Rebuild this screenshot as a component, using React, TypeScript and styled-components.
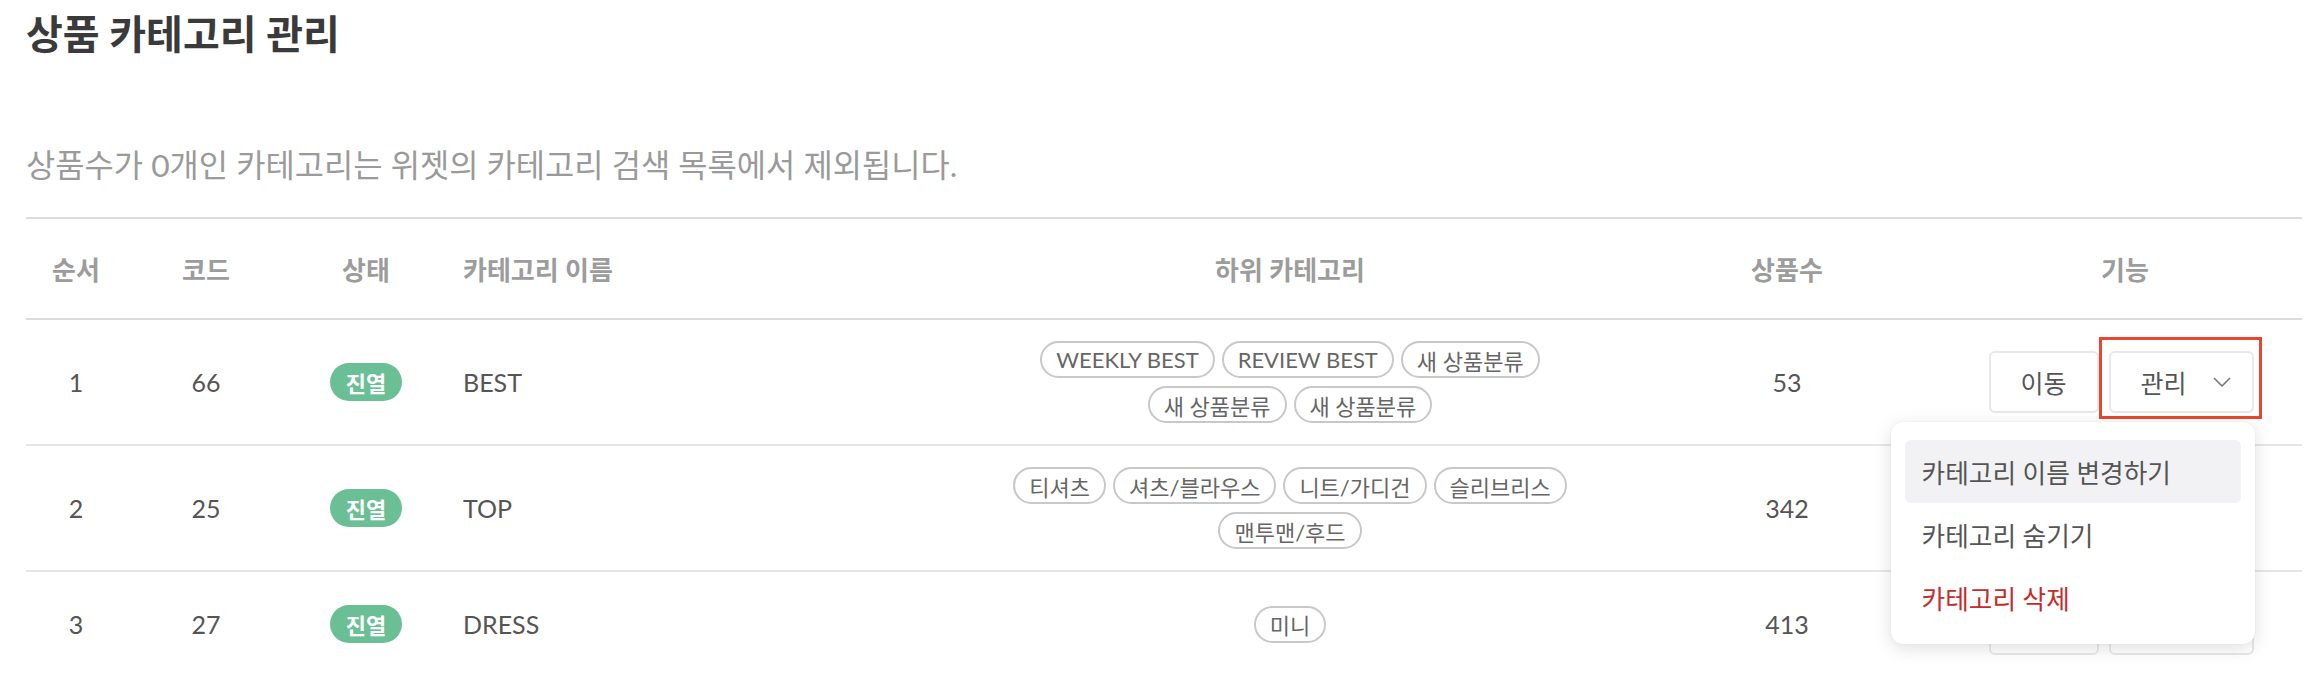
import React from "react";
import styled, { createGlobalStyle } from "styled-components";

const GlobalStyle = createGlobalStyle`
  html, body { margin: 0; padding: 0; background: #fff; }
  body {
    font-family: Lato, "Noto Sans CJK KR", sans-serif;
    color: #555;
  }
  * { box-sizing: border-box; }
`;

const Page = styled.div`
  padding: 0 10px 0 26px;
`;

const Title = styled.h1`
  margin: 0;
  padding-top: 8px;
  font-size: 40px;
  line-height: 52px;
  font-weight: 700;
  color: #3a3a3a;
`;

const Subtitle = styled.p`
  margin: 0;
  padding-top: 85px;
  font-size: 31.8px;
  line-height: 40px;
  color: #9a9a9a;
  height: 157px;
`;

const COLS = "100px 160px 160px 484px 720px 274px 1fr";

const HeaderRow = styled.div`
  display: grid;
  grid-template-columns: ${COLS};
  align-items: center;
  height: 103px;
  border-top: 2px solid #dcdcdc;
  border-bottom: 2px solid #dcdcdc;
`;

const HeadCell = styled.div<{ $align?: "left" | "center"; $shift?: number }>`
  text-align: ${(p) => p.$align ?? "center"};
  padding-left: ${(p) => (p.$align === "left" ? 17 : p.$shift ?? 0)}px;
  font-size: 26px;
  font-weight: 700;
  color: #9c9c9c;
`;

const Row = styled.div`
  display: grid;
  grid-template-columns: ${COLS};
  align-items: center;
  min-height: 101px;
  padding: 21px 0;
  border-bottom: 2px solid #e6e6e6;
`;

const Cell = styled.div<{ $align?: "left" | "center" }>`
  display: flex;
  justify-content: ${(p) => (p.$align === "left" ? "flex-start" : "center")};
  align-items: center;
  padding-left: ${(p) => (p.$align === "left" ? 17 : 0)}px;
  font-size: 25px;
  color: #555;
`;

const Badge = styled.span`
  display: inline-flex;
  align-items: center;
  justify-content: center;
  width: 72px;
  height: 38px;
  border-radius: 19px;
  background: #6bbf94;
  color: #fff;
  font-size: 22px;
  font-weight: 700;
`;

const TagList = styled.div`
  display: flex;
  flex-wrap: wrap;
  justify-content: center;
  gap: 8px 7px;
  max-width: 600px;
`;

const Tag = styled.span`
  display: inline-flex;
  align-items: center;
  height: 37px;
  padding: 0 14px;
  border: 2px solid #c8c8c8;
  border-radius: 19px;
  font-size: 22px;
  color: #666;
  white-space: nowrap;
`;

const Actions = styled.div`
  display: flex;
  gap: 10px;
  padding-left: 16px;
`;

const Button = styled.button`
  display: inline-flex;
  align-items: center;
  justify-content: center;
  height: 62px;
  padding: 0;
  background: #fff;
  border: 2px solid #e8e8e8;
  border-radius: 6px;
  font-family: inherit;
  font-size: 25px;
  color: #555;
  white-space: nowrap;
`;

const MoveButton = styled(Button)`
  width: 110px;
`;

const ManageWrap = styled.div`
  position: relative;
`;

const ManageButton = styled(Button)`
  width: 145px;
  padding: 0 21px 0 30px;
  justify-content: space-between;
`;

const Highlight = styled.span`
  position: absolute;
  top: -14px;
  left: -10px;
  right: -8px;
  bottom: -6px;
  border: 3px solid #e8472f;
  pointer-events: none;
  z-index: 5;
`;

const Menu = styled.div`
  position: absolute;
  top: 71px;
  right: -1px;
  width: 364px;
  padding: 18px 14px 15px;
  background: #fff;
  border-radius: 12px;
  box-shadow: 0 4px 18px rgba(0, 0, 0, 0.13), 0 0 1px rgba(0, 0, 0, 0.12);
  z-index: 10;
  display: flex;
  flex-direction: column;
`;

const MenuItem = styled.div<{ $active?: boolean; $danger?: boolean }>`
  height: 63px;
  display: flex;
  align-items: center;
  padding-left: 17px;
  border-radius: 6px;
  background: ${(p) => (p.$active ? "#f2f2f4" : "transparent")};
  color: ${(p) => (p.$danger ? "#c42b2b" : "#555")};
  font-size: 25.7px;
  white-space: nowrap;
`;

const Chevron = () => (
  <svg width="18" height="10" viewBox="0 0 18 10" fill="none">
    <polyline points="1,1 9,9 17,1" stroke="#777" strokeWidth="1.6" />
  </svg>
);

type Item = { order: number; code: number; name: string; subs: string[]; count: number };

const items: Item[] = [
  { order: 1, code: 66, name: "BEST", subs: ["WEEKLY BEST", "REVIEW BEST", "새 상품분류", "새 상품분류", "새 상품분류"], count: 53 },
  { order: 2, code: 25, name: "TOP", subs: ["티셔츠", "셔츠/블라우스", "니트/가디건", "슬리브리스", "맨투맨/후드"], count: 342 },
  { order: 3, code: 27, name: "DRESS", subs: ["미니"], count: 413 },
];

export default function App() {
  return (
    <Page>
      <GlobalStyle />
      <Title>상품 카테고리 관리</Title>
      <Subtitle>상품수가 0개인 카테고리는 위젯의 카테고리 검색 목록에서 제외됩니다.</Subtitle>
      <HeaderRow>
        <HeadCell>순서</HeadCell>
        <HeadCell>코드</HeadCell>
        <HeadCell>상태</HeadCell>
        <HeadCell $align="left">카테고리 이름</HeadCell>
        <HeadCell>하위 카테고리</HeadCell>
        <HeadCell>상품수</HeadCell>
        <HeadCell $shift={24}>기능</HeadCell>
      </HeaderRow>
      {items.map((it, i) => (
        <Row key={it.order}>
          <Cell>{it.order}</Cell>
          <Cell>{it.code}</Cell>
          <Cell>
            <Badge>진열</Badge>
          </Cell>
          <Cell $align="left">{it.name}</Cell>
          <Cell>
            <TagList>
              {it.subs.map((s, j) => (
                <Tag key={j}>{s}</Tag>
              ))}
            </TagList>
          </Cell>
          <Cell>{it.count}</Cell>
          <Cell>
            <Actions>
              <MoveButton>이동</MoveButton>
              <ManageWrap>
                <ManageButton>
                  관리
                  <Chevron />
                </ManageButton>
                {i === 0 && (
                  <>
                    <Highlight />
                    <Menu>
                      <MenuItem $active>카테고리 이름 변경하기</MenuItem>
                      <MenuItem>카테고리 숨기기</MenuItem>
                      <MenuItem $danger>카테고리 삭제</MenuItem>
                    </Menu>
                  </>
                )}
              </ManageWrap>
            </Actions>
          </Cell>
        </Row>
      ))}
    </Page>
  );
}
